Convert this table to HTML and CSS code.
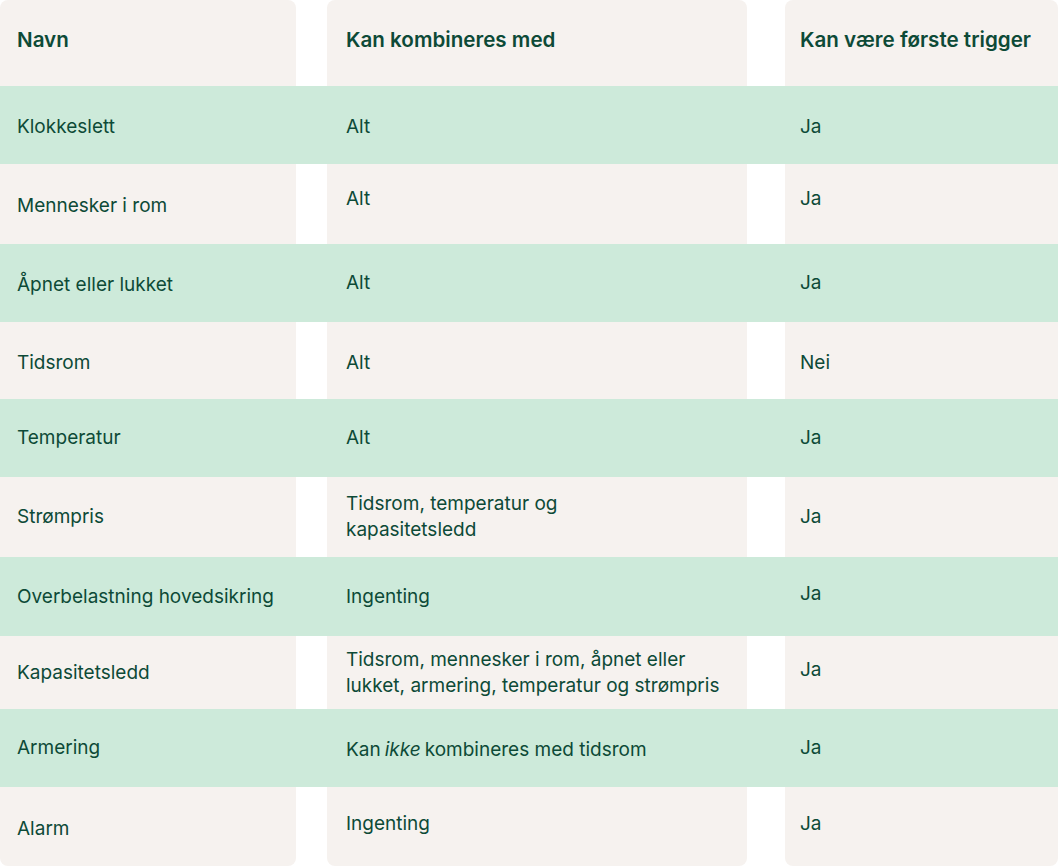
FILE: index.html
```html
<!DOCTYPE html>
<html lang="no">
<head>
<meta charset="utf-8">
<title>Triggere</title>
<link rel="stylesheet" href="styles.css">
</head>
<body>
<div class="table">
  <div class="row row--head">
    <div class="cell c1">Navn</div>
    <div class="cell c2">Kan kombineres med</div>
    <div class="cell c3">Kan være første trigger</div>
  </div>
  <div class="row row--green">
    <div class="cell c1 low">Klokkeslett</div>
    <div class="cell c2 low">Alt</div>
    <div class="cell c3 low">Ja</div>
  </div>
  <div class="row">
    <div class="cell c1 down">Mennesker i rom</div>
    <div class="cell c2 up">Alt</div>
    <div class="cell c3 up">Ja</div>
  </div>
  <div class="row row--green">
    <div class="cell c1 low">Åpnet eller lukket</div>
    <div class="cell c2 up-xs">Alt</div>
    <div class="cell c3 up-xs">Ja</div>
  </div>
  <div class="row">
    <div class="cell c1 down-s">Tidsrom</div>
    <div class="cell c2 down-s">Alt</div>
    <div class="cell c3 down-s">Nei</div>
  </div>
  <div class="row row--green">
    <div class="cell c1">Temperatur</div>
    <div class="cell c2">Alt</div>
    <div class="cell c3">Ja</div>
  </div>
  <div class="row">
    <div class="cell c1">Strømpris</div>
    <div class="cell c2">Tidsrom, temperatur og<br>kapasitetsledd</div>
    <div class="cell c3">Ja</div>
  </div>
  <div class="row row--green">
    <div class="cell c1">Overbelastning hovedsikring</div>
    <div class="cell c2">Ingenting</div>
    <div class="cell c3 up-s">Ja</div>
  </div>
  <div class="row">
    <div class="cell c1">Kapasitetsledd</div>
    <div class="cell c2">Tidsrom, mennesker i rom, åpnet eller<br>lukket, armering, temperatur og strømpris</div>
    <div class="cell c3 up-s">Ja</div>
  </div>
  <div class="row row--green">
    <div class="cell c1">Armering</div>
    <div class="cell c2 low">Kan <em>ikke</em> kombineres med tidsrom</div>
    <div class="cell c3">Ja</div>
  </div>
  <div class="row row--last">
    <div class="cell c1 down-s">Alarm</div>
    <div class="cell c2 up-s">Ingenting</div>
    <div class="cell c3 up-s">Ja</div>
  </div>
</div>
</body>
</html>
```
FILE: styles.css
```css
* { box-sizing: border-box; }
html, body {
  margin: 0;
  padding: 0;
  background: #ffffff;
}
body {
  font-family: Inter, "Noto Sans", "Liberation Sans", sans-serif;
  font-size: 19px;
  color: #0d4a37;
  width: 1058px;
}
.table {
  display: grid;
  grid-template-rows: 86px 78px 80px 78px 77px 78px 80px 79px 73px 78px 79px;
  width: 1058px;
}
.row {
  display: grid;
  grid-template-columns: 296px 451px 311px;
}
.row > .c2 { margin-left: 31px; }
.row > .c3 { margin-left: 38px; }
.cell {
  display: flex;
  align-items: center;
  background: #f6f2ef;
  line-height: 26px;
  white-space: nowrap;
}
.c1 { padding-left: 17px; }
.c2 { padding-left: 19px; }
.c3 { padding-left: 15px; }
.row--green { background: #cdeada; }
.row--green .cell { background: transparent; }
.row--head .cell {
  font-weight: 600;
  font-size: 20.6px;
  border-radius: 8px 8px 0 0;
  padding-bottom: 6px;
}
.row--last .cell { border-radius: 0 0 8px 8px; }
.low { padding-top: 3px; }
.up { padding-bottom: 11px; }
.up-xs { padding-bottom: 1px; }
.up-s { padding-bottom: 5px; }
.down { padding-top: 4px; }
.down-s { padding-top: 5px; }
em { font-style: italic; margin: 0 4px; }
```
